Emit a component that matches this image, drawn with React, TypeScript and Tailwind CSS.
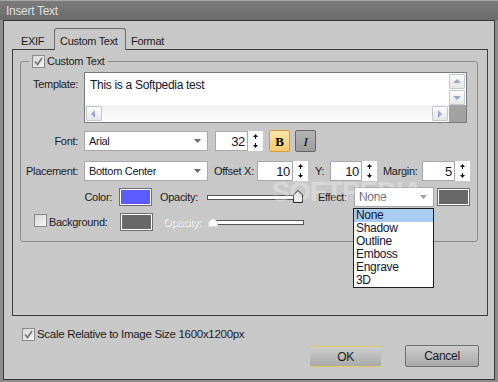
import React from 'react';

const Spin = () => (
  <div className="w-[15px] h-[20px] bg-white flex flex-col items-center justify-center gap-[4px]">
    <svg width="5" height="5" viewBox="0 0 5 5"><path d="M2.5 0 L5 3 L0 3 Z" fill="#111" /><rect x="2" y="3" width="1" height="2" fill="#111" /></svg>
    <svg width="5" height="5" viewBox="0 0 5 5"><rect x="2" y="0" width="1" height="2" fill="#111" /><path d="M0 2 L5 2 L2.5 5 Z" fill="#111" /></svg>
  </div>
);

const Caret = ({ color = '#6b6b6b' }: { color?: string }) => (
  <svg width="7" height="4" viewBox="0 0 7 4"><path d="M0 0 H7 L3.5 4 Z" fill={color} /></svg>
);

const Check = ({ checked }: { checked?: boolean }) => (
  <span className="inline-flex w-[13px] h-[13px] shrink-0 items-center justify-center border border-[#8a8a8a] bg-gradient-to-br from-[#d8d8d8] to-[#f4f4f4]">
    {checked && (
      <svg width="9" height="9" viewBox="0 0 9 9"><path d="M1 4.5 L3.5 7.5 L8 1" stroke="#7a7a7a" strokeWidth="1.8" fill="none" /></svg>
    )}
  </span>
);

const Swatch = ({ color }: { color: string }) => (
  <div className="w-[33px] h-[18px] border border-[#6e6e6e] bg-white p-[1px] shrink-0">
    <div className="w-full h-full" style={{ background: color }} />
  </div>
);

const ScrollBtn = ({ dir }: { dir: 'up' | 'down' | 'left' | 'right' }) => {
  const paths: Record<string, string> = {
    up: 'M1 6 L5 2 L9 6 Z',
    down: 'M1 3 L9 3 L5 7 Z',
    left: 'M6 1 L6 9 L2 5 Z',
    right: 'M3 1 L7 5 L3 9 Z',
  };
  return (
    <div className="w-[16px] h-[15px] flex items-center justify-center border border-[#c4c8d4] bg-gradient-to-b from-[#fbfbfb] to-[#e6e6e6] rounded-[1px]">
      <svg width="10" height="10" viewBox="0 0 10 10"><path d={paths[dir]} fill="#9aa6cf" /></svg>
    </div>
  );
};

const Slider = ({ pos, disabled }: { pos: number; disabled?: boolean }) => (
  <div className="relative w-[96px] h-[14px] flex items-center">
    <div className={`w-full h-[5px] bg-white border border-[#555] ${disabled ? 'ml-[5px]' : ''}`} />
    <svg className="absolute" style={{ left: pos, top: disabled ? 3 : 0 }} width="10" height={disabled ? 9 : 13} viewBox={disabled ? '0 0 10 9' : '0 0 10 13'}>
      {disabled ? (
        <path d="M0.5 8.5 V4 L5 0.5 L9.5 4 V8.5 Z" fill="#fafafa" stroke="#d8d8d8" />
      ) : (
        <path d="M0.5 12.5 V5 L5 0.5 L9.5 5 V12.5 Z" fill="#e6e6e6" stroke="#2a2a2a" />
      )}
    </svg>
  </div>
);

const Select = ({ value, w, muted }: { value: string; w: string; muted?: boolean }) => (
  <div className={`${w} h-[20px] bg-white border border-[#a8a8a8] flex items-center justify-between pl-[4px] pr-[6px]`}>
    <span className={muted ? 'text-[#5e5e6a] text-[12px]' : 'text-[#141430]'}>{value}</span>
    <Caret color={muted ? '#9a9a9a' : '#6b6b6b'} />
  </div>
);

const Num = ({ value, w }: { value: string; w: string }) => (
  <div className="flex">
    <div className={`${w} h-[20px] bg-white border border-[#a8a8a8] flex items-center justify-end pr-[2px] text-[13px] text-[#141430]`}>{value}</div>
    <Spin />
  </div>
);

const effects = ['None', 'Shadow', 'Outline', 'Emboss', 'Engrave', '3D'];

export default function App() {
  return (
    <div
      className="relative w-[498px] h-[382px] bg-[#8c8c8c] border-t border-[#a6a6a6] flex flex-col text-[11px] tracking-[-0.3px] text-[#1c1c1c] overflow-hidden"
      style={{ fontFamily: '"Liberation Sans", Arial, sans-serif' }}
    >
      <div className="h-[19px] shrink-0 bg-gradient-to-b from-[#7c7c7c] to-[#6a6a6a] flex items-center pl-[6px] text-[12px] text-[#dedede]">
        Insert Text
      </div>

      <div className="mx-[3px] mb-[2px] flex-1 bg-[#c8c8c8] border border-[#353535] flex flex-col">
        {/* tabs */}
        <div className="mt-[7px] ml-[8px] h-[21px] flex items-end relative z-10">
          <div className="w-[42px] h-[19px] pl-[9px] pt-[3px]">EXIF</div>
          <div className="w-[72px] h-[22px] pl-[5px] pt-[4px] border border-b-0 border-[#6a6a6a] rounded-t-[3px] bg-[#c8c8c8] mb-[-1px]">
            Custom Text
          </div>
          <div className="w-[44px] h-[19px] pl-[5px] pt-[3px]">Format</div>
        </div>

        {/* panel */}
        <div className="ml-[8px] mr-[6px] h-[267px] border border-[#3c3c3c] flex flex-col">
          <fieldset className="mt-[3px] ml-[7px] mr-[9px] border border-[#8c8c8c] rounded-[3px] pt-[2px] pb-[10px]">
            <legend className="ml-[8px] px-[3px]">
              <span className="inline-flex items-center gap-[2px]">
                <Check checked />
                <span>Custom Text</span>
              </span>
            </legend>

            {/* template */}
            <div className="flex">
              <div className="w-[57px] text-right pt-[4px]">Template:</div>
              <div className="ml-[6px] w-[383px] h-[51px] border border-[#7a7a7a] bg-white flex flex-col">
                <div className="flex flex-1">
                  <div className="flex-1 pl-[5px] pt-[3px] text-[12px] text-[#141430]">This is a Softpedia test</div>
                  <div className="w-[17px] pt-[1px] flex flex-col gap-[1px]">
                    <ScrollBtn dir="up" />
                    <ScrollBtn dir="down" />
                  </div>
                </div>
                <div className="h-[17px] flex">
                  <div className="flex-1 flex items-center justify-between px-[1px] bg-gradient-to-b from-[#f0f0f0] to-[#fdfdfd]">
                    <ScrollBtn dir="left" />
                    <ScrollBtn dir="right" />
                  </div>
                  <div className="w-[17px] bg-[#a2a2a2]" />
                </div>
              </div>
            </div>

            {/* font */}
            <div className="mt-[7px] flex items-center">
              <div className="w-[57px] text-right">Font:</div>
              <div className="ml-[6px]"><Select value="Arial" w="w-[124px]" /></div>
              <div className="ml-[7px]"><Num value="32" w="w-[33px]" /></div>
              <div className="ml-[6px] w-[21px] h-[22px] rounded-[2px] border border-[#d89a3c] bg-gradient-to-b from-[#fde7a8] to-[#f7c866] flex items-center justify-center font-bold text-[13px] text-black" style={{ fontFamily: '"Liberation Serif", serif' }}>B</div>
              <div className="ml-[5px] w-[21px] h-[22px] rounded-[2px] border border-[#666] bg-gradient-to-b from-[#b4b4b4] to-[#9c9c9c] flex items-center justify-center italic text-[13px] text-black" style={{ fontFamily: '"Liberation Serif", serif' }}>I</div>
            </div>

            {/* placement */}
            <div className="mt-[9px] flex items-center">
              <div className="w-[57px] text-right">Placement:</div>
              <div className="ml-[6px]"><Select value="Bottom Center" w="w-[124px]" /></div>
              <div className="ml-[6px] w-[43px]">Offset X:</div>
              <Num value="10" w="w-[36px]" />
              <div className="ml-[7px] w-[15px]">Y:</div>
              <Num value="10" w="w-[32px]" />
              <div className="ml-[6px] w-[39px]">Margin:</div>
              <Num value="5" w="w-[33px]" />
            </div>

            {/* color */}
            <div className="mt-[6px] flex items-center h-[20px]">
              <div className="w-[91px] text-right">Color:</div>
              <div className="ml-[7px]"><Swatch color="#5b5bff" /></div>
              <div className="ml-[8px] w-[47px]">Opacity:</div>
              <Slider pos={86} />
              <div className="ml-[15px] w-[36px]">Effect:</div>
              <Select value="None" w="w-[80px]" muted />
              <div className="ml-[3px]"><Swatch color="#686868" /></div>
            </div>

            {/* background */}
            <div className="mt-[6px] flex items-center h-[18px]">
              <div className="ml-[13px]"><Check /></div>
              <div className="ml-[2px] w-[71px]">Background:</div>
              <Swatch color="#686868" />
              <div className="ml-[10px] w-[45px] text-[#c4c4c4]" style={{ textShadow: '1px 1px 0 #fff' }}>Opacity:</div>
              <Slider pos={0} disabled />
            </div>
          </fieldset>
        </div>

        <div className="mt-[10px] ml-[18px] flex items-center gap-[2px]">
          <Check checked />
          <span className="text-[11.5px]">Scale Relative to Image Size 1600x1200px</span>
        </div>

        <div className="mt-[2px] mr-[15px] flex justify-end items-start gap-[23px]">
          <button className="mt-[1px] w-[73px] h-[21px] border border-[#e8c860] rounded-[2px] bg-gradient-to-b from-[#cecece] to-[#a9a9a9] text-[12px]">OK</button>
          <button className="w-[74px] h-[22px] border border-[#6e6e6e] rounded-[2px] bg-gradient-to-b from-[#cecece] to-[#a9a9a9] text-[12px]">Cancel</button>
        </div>
      </div>

      {/* watermark */}
      <div className="absolute left-[272px] top-[176px] text-[27px] leading-[30px] font-bold tracking-[-0.5px] text-white/30 pointer-events-none">
        SOFTPEDIA<sup className="text-[8px]">®</sup>
      </div>

      {/* open effect list */}
      <div className="absolute left-[353px] top-[207px] w-[81px] border border-[#1e1e1e] bg-white text-[12px] text-[#141430]">
        {effects.map((e, i) => (
          <div key={e} className={`h-[13px] leading-[13px] pl-[2px] ${i === 0 ? 'bg-[#a9cdf0]' : ''}`}>{e}</div>
        ))}
      </div>
    </div>
  );
}
